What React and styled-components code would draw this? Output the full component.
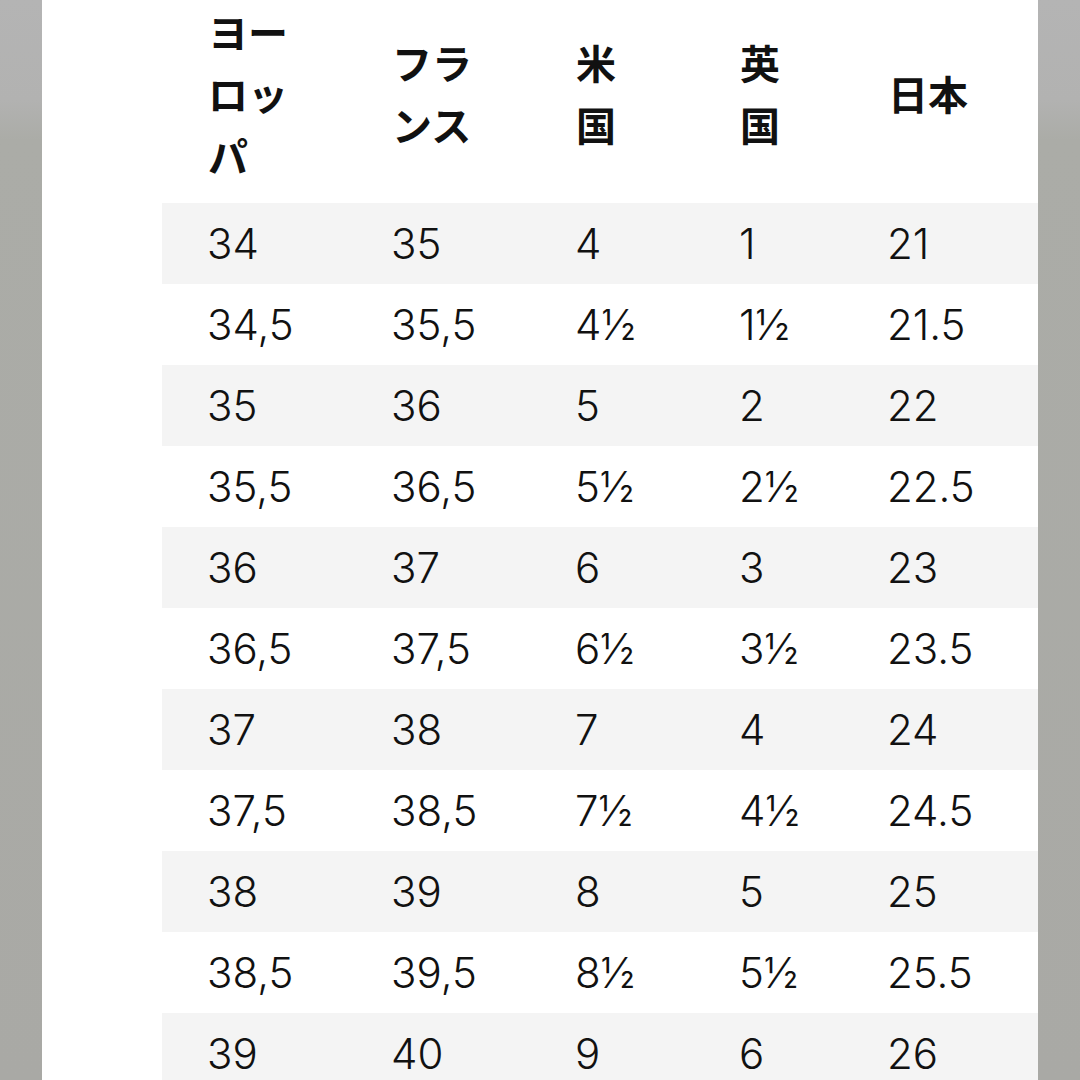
import React from "react";
import styled, { createGlobalStyle } from "styled-components";

const GlobalStyle = createGlobalStyle`
  html, body {
    margin: 0;
    padding: 0;
  }
  body {
    font-family: Inter, "Noto Sans CJK JP", sans-serif;
    color: #111;
  }
`;

const headers = ["ヨーロッパ", "フランス", "米国", "英国", "日本"];

const sizes = [
  ["34", "35", "4", "1", "21"],
  ["34,5", "35,5", "4½", "1½", "21.5"],
  ["35", "36", "5", "2", "22"],
  ["35,5", "36,5", "5½", "2½", "22.5"],
  ["36", "37", "6", "3", "23"],
  ["36,5", "37,5", "6½", "3½", "23.5"],
  ["37", "38", "7", "4", "24"],
  ["37,5", "38,5", "7½", "4½", "24.5"],
  ["38", "39", "8", "5", "25"],
  ["38,5", "39,5", "8½", "5½", "25.5"],
  ["39", "40", "9", "6", "26"],
];

const colWidths = [184, 184, 164, 148, 196];

export default function App() {
  return (
    <>
      <GlobalStyle />
      <Page>
        <Panel>
          <Table>
            <colgroup>
              {colWidths.map((w, i) => (
                <col key={i} style={{ width: w }} />
              ))}
            </colgroup>
            <thead>
              <tr>
                {headers.map((h) => (
                  <HeadCell key={h}>{h}</HeadCell>
                ))}
              </tr>
            </thead>
            <tbody>
              {sizes.map((row, index) => (
                <Row key={index} $striped={index % 2 === 0}>
                  {row.map((value, i) => (
                    <Cell key={i}>{value}</Cell>
                  ))}
                </Row>
              ))}
            </tbody>
          </Table>
        </Panel>
      </Page>
    </>
  );
}

const Page = styled.div`
  height: 1080px;
  overflow: hidden;
  display: flex;
  justify-content: center;
  background: linear-gradient(
    #b4b4b4 0,
    #b2b2b1 100px,
    #abaca7 140px,
    #a9a9a5 100%
  );
`;

const Panel = styled.div`
  width: 996px;
  height: 1080px;
  overflow: hidden;
  background: #ffffff;
  padding-left: 120px;
  box-sizing: border-box;
`;

const Table = styled.table`
  width: 876px;
  table-layout: fixed;
  border-collapse: collapse;
`;

const HeadCell = styled.th`
  text-align: left;
  vertical-align: middle;
  height: 203px;
  box-sizing: border-box;
  padding: 0 46px 12px 46px;
  font-family: Inter, "Noto Sans CJK JP", sans-serif;
  font-size: 40px;
  font-weight: 700;
  line-height: 62px;
  color: #111;
`;

const Row = styled.tr`
  background: ${(p) => (p.$striped ? "#f4f4f4" : "#ffffff")};
`;

const Cell = styled.td`
  height: 81px;
  padding: 0 45px;
  box-sizing: border-box;
  font-size: 42px;
  font-weight: 350;
  line-height: 81px;
  color: #111;
  white-space: nowrap;
`;
